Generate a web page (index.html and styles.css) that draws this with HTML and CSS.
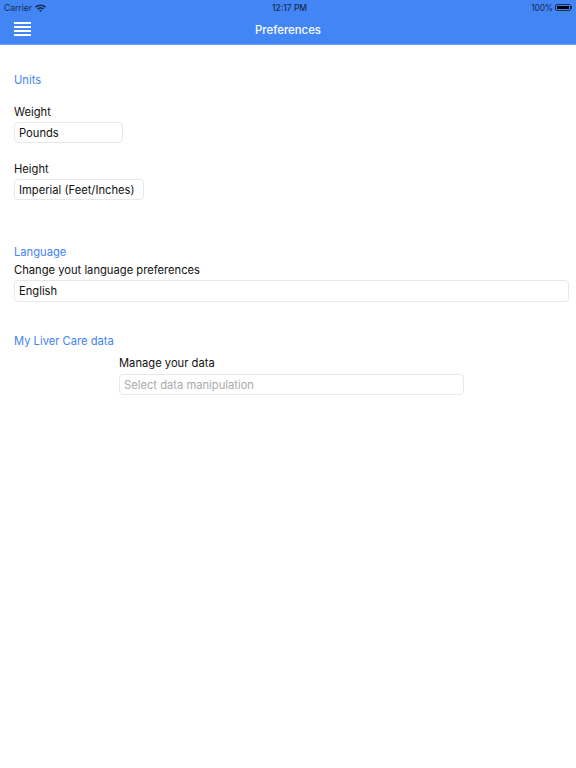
FILE: index.html
```html
<!DOCTYPE html>
<html lang="en">
<head>
    <meta charset="UTF-8">
    <meta name="viewport" content="width=device-width, initial-scale=1.0">
    <title>Preferences</title>
    <link rel="stylesheet" href="styles.css">
</head>
<body>

    <header class="header">
        <!-- Status bar -->
        <div class="status-bar">
            <div class="status-left">
                <span>Carrier</span>
                <svg class="wifi-icon" width="11" height="8" viewBox="0 0 11 8">
                    <path d="M0 2.6 A8 8 0 0 1 11 2.6 L9.8 3.8 A6.3 6.3 0 0 0 1.2 3.8 Z" fill="#1a2c50"/>
                    <path d="M2 4.6 A5.2 5.2 0 0 1 9 4.6 L7.8 5.8 A3.5 3.5 0 0 0 3.2 5.8 Z" fill="#1a2c50"/>
                    <path d="M4 6.6 A2.2 2.2 0 0 1 7 6.6 L5.5 8 Z" fill="#1a2c50"/>
                </svg>
            </div>
            <div class="status-time">12:17 PM</div>
            <div class="status-right">
                <span>100%</span>
                <div class="battery"><div class="battery-fill"></div></div>
                <div class="battery-tip"></div>
            </div>
        </div>

        <!-- Nav bar -->
        <div class="nav-bar">
            <div class="menu-icon">
                <span></span>
                <span></span>
                <span></span>
                <span></span>
            </div>
            <div class="nav-title">Preferences</div>
        </div>
    </header>

    <main class="content">
        <section class="units">
            <h2 class="section-title">Units</h2>
            <div class="form-group weight-group">
                <label>Weight</label>
                <div class="field weight-field">Pounds</div>
            </div>
            <div class="form-group height-group">
                <label>Height</label>
                <div class="field height-field">Imperial (Feet/Inches)</div>
            </div>
        </section>

        <section class="language">
            <h2 class="section-title">Language</h2>
            <div class="form-group">
                <label>Change yout language preferences</label>
                <div class="field language-field">English</div>
            </div>
        </section>

        <section class="data">
            <h2 class="section-title">My Liver Care data</h2>
            <div class="form-group data-group">
                <label>Manage your data</label>
                <div class="field data-field">Select data manipulation</div>
            </div>
        </section>
    </main>

</body>
</html>
```

FILE: styles.css
```css
* {
    box-sizing: border-box;
    margin: 0;
    padding: 0;
}

body {
    font-family: Inter, "Liberation Sans", sans-serif;
    background-color: #fff;
    color: #111;
}

.header {
    height: 45px;
    background-color: #4285f4;
    border-bottom: 1px solid #6a9ff6;
}

.status-bar {
    display: flex;
    justify-content: space-between;
    align-items: center;
    height: 15px;
    padding: 0 4px;
    font-size: 8.5px;
    color: #1a2c50;
}

.status-left,
.status-right {
    display: flex;
    align-items: center;
    width: 90px;
}

.status-right {
    justify-content: flex-end;
}

.wifi-icon {
    margin-left: 3px;
}

.status-time {
    margin-left: 3px;
    font-weight: 500;
}

.status-right span {
    font-size: 8.4px;
    letter-spacing: -0.1px;
}

.battery {
    width: 16px;
    height: 7px;
    margin-left: 2px;
    padding: 1px;
    border: 1px solid #1a2c50;
    border-radius: 2px;
}

.battery-fill {
    height: 100%;
    background-color: #000;
}

.battery-tip {
    width: 1px;
    height: 3px;
    background-color: #1a2c50;
}

.nav-bar {
    display: flex;
    align-items: center;
    height: 29px;
    padding-left: 14px;
    position: relative;
}

.menu-icon {
    display: flex;
    flex-direction: column;
    gap: 2px;
    width: 17px;
    margin-top: -1px;
}

.menu-icon span {
    display: block;
    height: 2px;
    background-color: #fff;
}

.nav-title {
    position: absolute;
    left: 0;
    right: 0;
    text-align: center;
    color: #fff;
    font-size: 11.4px;
    font-weight: 500;
}

.content {
    padding: 27px 7px 0 14px;
}

.section-title {
    font-size: 11.2px;
    font-weight: 400;
    line-height: 16px;
    color: #4285f4;
}

label {
    display: block;
    font-size: 11.2px;
    line-height: 16px;
}

.field {
    height: 21px;
    padding-left: 4px;
    border: 1px solid #e8e8e8;
    border-radius: 4px;
    font-size: 11.2px;
    line-height: 21px;
}

.form-group label {
    margin-bottom: 2px;
}

.weight-group {
    margin-top: 16px;
}

.height-group {
    margin-top: 18px;
}

.weight-field {
    width: 109px;
}

.height-field {
    width: 130px;
}

.language {
    margin-top: 44px;
}

.language .form-group {
    margin-top: 2px;
}

.language-field {
    height: 22px;
}

.data {
    margin-top: 31px;
}

.data-group {
    width: 345px;
    margin: 6px 0 0 105px;
}

.data-group label {
    margin-bottom: 3px;
}

.data-field {
    color: #aaa;
}
```
